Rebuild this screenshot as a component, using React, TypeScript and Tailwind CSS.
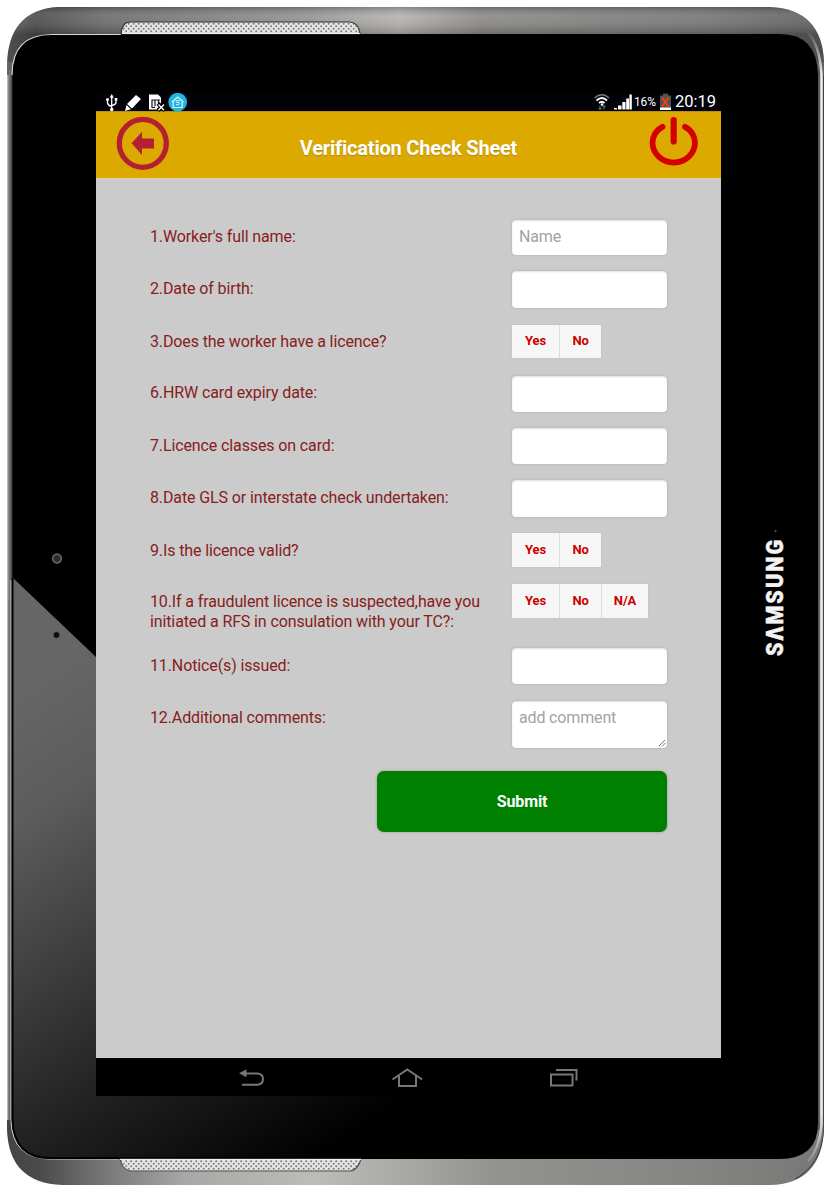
import React from "react";

type Row = {
  label: string;
  kind: "input" | "choice" | "textarea";
  placeholder?: string;
  options?: string[];
  row: string;
  field: string;
  text: string;
};

const rows: Row[] = [
  { label: "1.Worker's full name:", kind: "input", placeholder: "Name", row: "h-[51px]", field: "h-[35px]", text: "pt-[7px]" },
  { label: "2.Date of birth:", kind: "input", row: "h-[54px]", field: "h-[37px]", text: "pt-[8px]" },
  { label: "3.Does the worker have a licence?", kind: "choice", options: ["Yes", "No"], row: "h-[51px]", field: "h-[33px]", text: "pt-[7px]" },
  { label: "6.HRW card expiry date:", kind: "input", row: "h-[52px]", field: "h-[36px]", text: "pt-[7px]" },
  { label: "7.Licence classes on card:", kind: "input", row: "h-[52px]", field: "h-[36px]", text: "pt-[8px]" },
  { label: "8.Date GLS or interstate check undertaken:", kind: "input", row: "h-[53px]", field: "h-[37px]", text: "pt-[8px]" },
  { label: "9.Is the licence valid?", kind: "choice", options: ["Yes", "No"], row: "h-[51px]", field: "h-[34px]", text: "pt-[8px]" },
  { label: "10.If a fraudulent licence is suspected,have you initiated a RFS in consulation with your TC?:", kind: "choice", options: ["Yes", "No", "N/A"], row: "h-[64px]", field: "h-[34px]", text: "pt-[8px]" },
  { label: "11.Notice(s) issued:", kind: "input", row: "h-[53px]", field: "h-[36px]", text: "pt-[8px]" },
  { label: "12.Additional comments:", kind: "textarea", placeholder: "add comment", row: "h-[70px]", field: "h-[47px]", text: "pt-[7px]" },
];

const fieldBase =
  "block w-[155px] rounded-[4px] bg-white px-[7px] text-[16px] leading-[20px] tracking-[-0.15px] text-[#333333] placeholder:text-[#a3a3a3] placeholder:opacity-100 shadow-[0_0_3px_rgba(0,0,0,0.15),inset_0_1px_2px_rgba(0,0,0,0.12)] outline-none";

function Field({ row }: { row: Row }) {
  if (row.kind === "choice") {
    return (
      <div className={`flex w-fit bg-[#f6f6f6] text-[13px] font-bold tracking-[-0.15px] text-[#cc0000] shadow-[0_0_2px_rgba(0,0,0,0.06)] ${row.field}`}>
        {row.options!.map((o) => (
          <button
            key={o}
            className={`flex items-center justify-center border-l border-[#dddddd] pb-[1px] first:border-l-0 ${o === "No" ? "w-[42px]" : "w-[47px]"}`}
          >
            {o}
          </button>
        ))}
      </div>
    );
  }
  if (row.kind === "textarea") {
    return (
      <div className={`relative w-[155px] ${row.field}`}>
        <textarea className={`${fieldBase} h-full resize-none overflow-hidden pt-[7px]`} placeholder={row.placeholder} />
        <svg className="absolute right-[1px] bottom-[1px]" width="8" height="8" viewBox="0 0 8 8" stroke="#777" strokeWidth="1">
          <path d="M1 7 7 1M4 7.5 7.5 4" />
        </svg>
      </div>
    );
  }
  return <input className={`${fieldBase} ${row.field} pb-[2px]`} placeholder={row.placeholder} />;
}

function Tablet() {
  return (
    <svg className="absolute inset-0" width="825" height="1200" viewBox="0 0 825 1200">
      <defs>
        <linearGradient id="metal" x1="0" y1="0" x2="1" y2="0">
          <stop offset="0" stopColor="#666" />
          <stop offset=".035" stopColor="#4c4c4c" />
          <stop offset=".12" stopColor="#6c6c6c" />
          <stop offset=".36" stopColor="#92918f" />
          <stop offset=".48" stopColor="#b5b3b0" />
          <stop offset=".58" stopColor="#8b8a88" />
          <stop offset=".85" stopColor="#777" />
          <stop offset="1" stopColor="#606060" />
        </linearGradient>
        <linearGradient id="metalLow" x1="0" y1="0" x2="1" y2="0">
          <stop offset="0" stopColor="#444" />
          <stop offset=".04" stopColor="#4a4a4a" />
          <stop offset=".12" stopColor="#777" />
          <stop offset=".22" stopColor="#a8a8a6" />
          <stop offset=".38" stopColor="#bcbcb8" />
          <stop offset=".6" stopColor="#92928f" />
          <stop offset=".85" stopColor="#848482" />
          <stop offset="1" stopColor="#777" />
        </linearGradient>
        <linearGradient id="shade" gradientUnits="userSpaceOnUse" x1="0" y1="7" x2="0" y2="34">
          <stop offset="0" stopColor="#222" stopOpacity=".3" />
          <stop offset=".4" stopColor="#fff" stopOpacity=".08" />
          <stop offset="1" stopColor="#000" stopOpacity=".2" />
        </linearGradient>
        <linearGradient id="rim" gradientUnits="userSpaceOnUse" x1="0" y1="30" x2="0" y2="1170">
          <stop offset="0" stopColor="#eee" stopOpacity="0" />
          <stop offset=".04" stopColor="#eee" />
          <stop offset=".95" stopColor="#eee" />
          <stop offset="1" stopColor="#eee" stopOpacity="0" />
        </linearGradient>
        <linearGradient id="glare" gradientUnits="userSpaceOnUse" x1="20" y1="690" x2="330" y2="1150">
          <stop offset="0" stopColor="#666" />
          <stop offset=".2" stopColor="#5c5c5c" />
          <stop offset=".68" stopColor="#222" />
          <stop offset="1" stopColor="#000" />
        </linearGradient>
        <pattern id="mesh" width="5" height="5" patternUnits="userSpaceOnUse">
          <rect width="5" height="5" fill="#e4e4e4" />
          <circle cx="1.2" cy="1.2" r=".95" fill="#777" />
          <circle cx="3.7" cy="3.7" r=".95" fill="#777" />
        </pattern>
        <clipPath id="top"><rect width="825" height="600" /></clipPath>
        <clipPath id="bottom"><rect y="600" width="825" height="600" /></clipPath>
        <clipPath id="body">
          <path d="M58 7H770Q822 9 824 62V1130Q821 1184 770 1185H62Q9 1183 7 1130V65Q8 10 58 7Z" />
        </clipPath>
        <clipPath id="face">
          <path d="M52 34H785Q818 34 818 75V1123Q818 1159 779 1159H50Q13 1159 13 1120V75Q13 34 52 34Z" />
        </clipPath>
      </defs>
      <g clipPath="url(#body)">
        <rect x="6" width="819" height="620" fill="url(#metal)" clipPath="url(#top)" />
        <rect width="825" height="62" fill="url(#shade)" />
        <rect x="6" y="580" width="819" height="620" fill="url(#metalLow)" clipPath="url(#bottom)" />
        <path d="M7.500 75V1120" stroke="#b9b9b9" strokeWidth="2" />
        <path d="M9.800 70V1120" stroke="#707070" strokeWidth="1.500" />
        <path d="M818.500 70V1130" stroke="#555" strokeWidth="2" />
        <path d="M806 30Q820 44 821.500 75V1125Q820 1147 808 1162" fill="none" stroke="url(#rim)" strokeWidth="2.500" />
        <path d="M823.800 75V1132Q821 1165 795 1179" fill="none" stroke="#333" strokeWidth="1" />
      </g>
      <path d="M52 34H780Q817 34 818 75V1123Q818 1159 779 1159H50Q12 1159 12 1120V75Q12 34 52 34Z" fill="#000" />
      <path d="M12 75Q12 34.500 52 34.500H121" fill="none" stroke="#d8d8d8" strokeWidth="1.200" />
      <path d="M12 75V580" fill="none" stroke="#333" />
      <path d="M11 580V1120Q12 1158 50 1159H119" fill="none" stroke="#c8c8c8" strokeWidth="1.200" />
      <g clipPath="url(#face)">
        <path d="M13 578 96 657V1096H420V1160H13Z" fill="url(#glare)" />
      </g>
      <path d="M12.500 578V1120Q14 1158 50 1158H400" fill="none" stroke="#000" strokeWidth="2" />
      <path d="M121 34Q122 22 130 22H350Q359 23 360 34Z" fill="url(#mesh)" stroke="#333" strokeWidth="1.200" />
      <path d="M122 33.500H360" stroke="#eee" />
      <path d="M120 1159H361Q358 1170 350 1171H130Q122 1169 120 1159Z" fill="url(#mesh)" stroke="#555" strokeWidth="1.200" />
      <path d="M120 1159.500H361" stroke="#eee" />
      <circle cx="57" cy="558.500" r="4.300" fill="#2c2c2c" stroke="#666" strokeWidth="1.700" />
      <circle cx="56.500" cy="635" r="3.300" fill="#0b0b14" stroke="#55555f" />
      <circle cx="775.500" cy="531" r="1.200" fill="#444" />
      <text
        transform="translate(782.5 656) rotate(-90) scale(.88 1)"
        fontFamily="Roboto, 'Liberation Sans', sans-serif"
        fontWeight="900"
        fontSize="24.500"
        fill="#f3f3f3"
        stroke="#f3f3f3"
        strokeWidth=".5"
        textLength="132"
        lengthAdjust="spacing"
      >
        SΛMSUNG
      </text>
    </svg>
  );
}

function StatusBar() {
  return (
    <div className="flex h-[18px] items-center justify-between bg-[#01020a] pr-[5px] pl-[10px] text-white">
      <svg width="84" height="19" viewBox="106 92.5 84 19" fill="none">
        <g stroke="#fff" strokeWidth="1.300">
          <path d="M111.700 95V110M107.500 99V102.500Q108 105 111.700 106M116 99V102Q115.500 104.500 111.700 105" />
          <path d="m110 97 1.700-3 1.700 3z" fill="#fff" strokeWidth=".5" />
        </g>
        <g fill="#fff">
          <circle cx="107.500" cy="99" r="1.500" />
          <path d="M114.700 97.500h2.600v2.700h-2.600z" />
          <circle cx="111.700" cy="109" r="1.700" />
          <path d="m127 103.500 9-9 5 4-9 9.500ZM126.500 104.500l4.500 4.300-6 1.700Z" />
          <path d="M149 94h9l3 3v12h-12z" />
        </g>
        <path d="M151.500 99.500H160M152 99v8h3M155 100v6M158.500 100v4" stroke="#15151c" strokeWidth="1.200" />
        <path d="m158 103 7 7m0-7-7 7" stroke="#01020a" strokeWidth="4" />
        <path d="m158.500 104 5.500 5.700m0-5.700-5.500 5.700" stroke="#fff" strokeWidth="1.300" />
        <circle cx="177.700" cy="101.700" r="9.300" fill="#20b5df" />
        <path d="M172 101.500 177.700 96.500l5.700 5M173.200 101v6h9v-6" stroke="#d9f6ff" strokeWidth="1.200" />
        <path d="M179.500 100.200q-3.500-1-3.500.6t1.800 1.100 1.700 1.200-3.500 1" stroke="#d9f6ff" />
      </svg>
      <div className="flex items-center">
        <svg width="38" height="19" viewBox="594 92.5 38 19" fill="none">
          <path d="M594.500 97.500Q602 91 609 97.500" stroke="#777b80" strokeWidth="1.500" />
          <path d="M596.500 100Q602 95 607 100M599 102.500Q602 100 604.500 102.500" stroke="#fff" strokeWidth="1.900" />
          <circle cx="602" cy="104" r="1.200" fill="#fff" />
          <path d="M600 105v4m-1.500-1.500L600 109l1.500-1.500M604 109v-4m-1.500 1.500L604 105l1.500 1.500" stroke="#6e8490" />
          <path d="M614 109v-1.500h3V109zM618 109v-4h3.500v4zM622.300 109v-7.500h3.200V109zM626.200 109V98h2.800v11zM629.400 109V94h2.400v15z" fill="#fff" />
        </svg>
        <span className="ml-[2px] w-[25px] text-[12px] leading-[18px] tracking-[-0.1px]">16%</span>
        <svg width="12" height="19" viewBox="658 92.5 12 19">
          <path d="M659 95h3v-2h5v2h3v14h-11z" fill="#4b5554" />
          <path d="M659 107h11v2.500h-11z" fill="#fff" />
          <path d="m661 97 6.500 9m0-9-6.500 9" stroke="#ff3b12" strokeWidth="2" />
        </svg>
        <span className="ml-[4px] text-[16.500px] leading-[18px]">20:19</span>
      </div>
    </div>
  );
}

export default function App() {
  return (
    <div className="relative h-[1200px] w-[825px] overflow-hidden bg-white font-['Roboto','Liberation_Sans',sans-serif]">
      <Tablet />
      <div className="relative ml-[96px] w-[625px] pt-[93px]">
        <StatusBar />
        <header className="flex h-[67px] items-start justify-between border-t border-[#bf9009] bg-[#dca900] pr-[22px] pl-[20px]">
          <svg className="mt-[4px]" width="54" height="55" viewBox="116 116 54 55">
            <ellipse cx="142.800" cy="143.300" rx="23.500" ry="24" fill="none" stroke="#b32032" strokeWidth="5.300" />
            <path d="m131.500 143.300 10.500-11.500v6.700h12v10h-12v6.500Z" fill="#b32032" />
          </svg>
          <h1 className="mt-[21px] mr-[2px] text-[20px] leading-[30px] font-bold tracking-[-0.2px] text-white [text-shadow:0_1px_1px_rgba(90,60,0,0.3)]">Verification Check Sheet</h1>
          <svg className="mt-[3px]" width="50" height="54" viewBox="649 115 50 54" fill="none" stroke="#d40000" strokeLinecap="round">
            <path d="M662.500 126.800C656 130 652.500 137 652.500 142.500A21.200 20 0 0 0 695 142.500C695 137 691.500 130 685 126.800" strokeWidth="5.800" />
            <path d="M673.700 120v21.500" strokeWidth="6.200" />
          </svg>
        </header>
        <main className="h-[880px] border-t border-[#d8d3bd] bg-[#cbcbcb] pt-[41px] pr-[54px] pl-[54px]">
          {rows.map((r) => (
            <div key={r.label} className={`flex ${r.row}`}>
              <label className={`w-[362px] pr-[24px] text-[16px] leading-[20px] tracking-[-0.12px] text-[#87201d] ${r.text}`}>{r.label}</label>
              <Field row={r} />
            </div>
          ))}
          <button className="ml-auto flex h-[61px] w-[290px] items-center justify-center rounded-[7px] bg-[#008000] text-[16px] font-bold tracking-[-0.1px] text-white shadow-[0_0_3px_rgba(0,0,0,0.25)]">
            Submit
          </button>
        </main>
        <nav className="flex h-[38px] items-center bg-black pl-[142px]">
          <svg width="342" height="38" viewBox="238 1058 342 38" fill="none" stroke="#777" strokeWidth="2">
            <path d="M244 1073.500h13q6 0 6 5.500t-6 5.700h-15" />
            <path d="m239 1073.300 7.500-4v8Z" fill="#777" stroke="none" />
            <path d="m392.500 1079.500 14.800-10 14.800 10M399 1076v10h17v-10" />
            <path d="M551 1074.500h21.500v11h-21.500zM556 1070h20.500v10.500" />
          </svg>
        </nav>
      </div>
    </div>
  );
}
